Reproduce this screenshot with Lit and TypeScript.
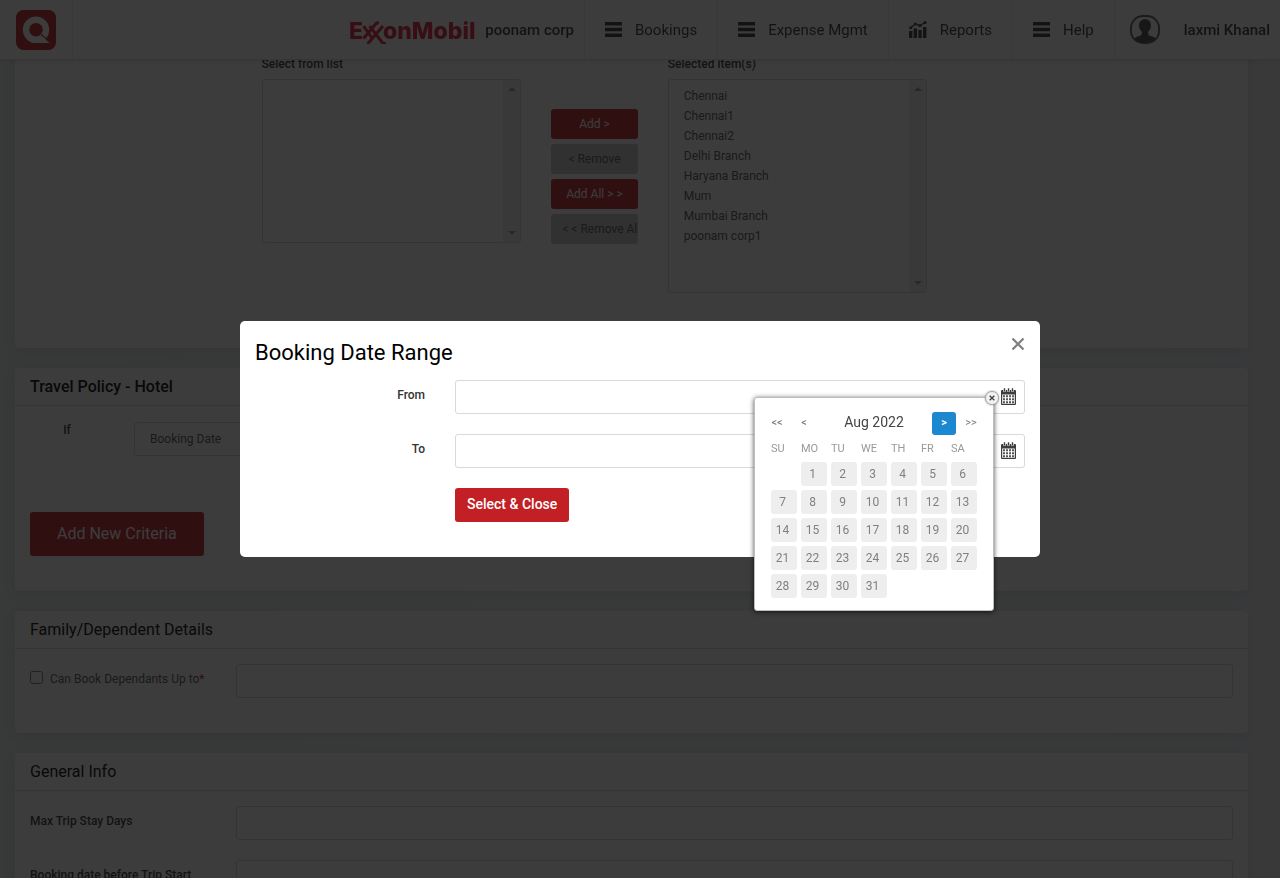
import { LitElement, html, css, svg, nothing } from "lit";
import { customElement, property } from "lit/decorators.js";

const base = css`
  *,
  *::before,
  *::after {
    box-sizing: border-box;
  }
  button,
  input,
  select {
    font: inherit;
    color: inherit;
    margin: 0;
  }
  button {
    cursor: pointer;
    border: 0;
    padding: 0;
    background: none;
  }
`;

const menuIcon = svg`<svg class="icon" viewBox="0 0 17 15" width="17" height="15" aria-hidden="true">
  <path d="M0 0h17v3.4H0zM0 5.8h17v3.4H0zM0 11.6h17V15H0z" fill="#2f3534"/>
</svg>`;

const chartIcon = svg`<svg class="icon" viewBox="0 0 18 17" width="18" height="17" aria-hidden="true">
  <path d="M0 10h3.4v7H0zM4.6 7.500h3.400V17H4.600zM9.300 9h3.400v8H9.300zM14 6h3.400v11H14z" fill="#3a3a3a"/>
  <path d="M1.500 7L6.300 3l4.700 1.600L16 1.500" fill="none" stroke="#3a3a3a" stroke-width="1.200"/>
  <g fill="#3a3a3a"><circle cx="1.700" cy="6.700" r="1.500"/><circle cx="6.300" cy="3" r="1.600"/><circle cx="11" cy="4.600" r="1.600"/><circle cx="16" cy="1.600" r="1.600"/></g>
</svg>`;

const avatarIcon = svg`<svg viewBox="0 0 30 29" width="30" height="29" aria-hidden="true">
  <defs><clipPath id="face"><rect x="1.500" y="1.500" width="27" height="26" rx="11"/></clipPath></defs>
  <g clip-path="url(#face)" fill="#484848">
    <path d="M15 4.300c3.600 0 6 2.500 6 6 0 2.600-1.200 5-2.800 6.300v2.200c0 1.200 1 1.700 3.300 2.500 3 1 5.500 2.300 5.500 7.700H3c0-5.400 2.500-6.700 5.500-7.700 2.300-.8 3.300-1.300 3.300-2.500v-2.200C10.200 15.300 9 12.900 9 10.300c0-3.500 2.400-6 6-6z"/>
  </g>
  <rect x="1" y="1" width="28" height="27" rx="12" fill="none" stroke="#555" stroke-width="1.800"/>
</svg>`;

const appLogo = svg`<svg viewBox="0 0 40 40" width="40" height="40" role="img" aria-label="Home">
  <rect width="40" height="40" rx="7.500" fill="#c32026"/>
  <circle cx="20" cy="19.800" r="10" fill="none" stroke="#fff" stroke-width="6.400"/>
  <path d="M20 33h13.500L24.500 24.500l-4 4.500z" fill="#fff"/>
  <path d="M25 24.500l7.500 6" stroke="#c32026" stroke-width="1.200"/>
</svg>`;

const corpLogo = svg`<svg class="corp-logo" viewBox="0 0 126 28" width="126" height="28" role="img" aria-label="ExxonMobil">
  <g fill="#e01b35" font-family="Inter, sans-serif" font-weight="800" font-size="23">
    <text x="0" y="23">E</text>
    <text x="34" y="23">onMobil</text>
  </g>
  <g stroke="#e01b35" stroke-width="3" fill="none">
    <path d="M14.500 10L23 22M14.500 22.500L27.500 7H30M20.500 10L34 27.500H37M18.500 28L34 10"/>
  </g>
</svg>`;

const calendarIcon = svg`<svg viewBox="0 0 15 17" width="15" height="17" aria-hidden="true">
  <path d="M0 3a1 1 0 0 1 1-1h13a1 1 0 0 1 1 1v13a1 1 0 0 1-1 1H1a1 1 0 0 1-1-1z" fill="#3d3d3d"/>
  <path d="M1.200 6.500h12.600v9.300H1.200z" fill="#fff"/>
  <path d="M2 7.200h2v2H2zM5 7.200h2v2H5zM8 7.200h2v2H8zM11 7.200h2v2h-2zM2 10.200h2v2H2zM5 10.200h2v2H5zM8 10.200h2v2H8zM11 10.200h2v2h-2zM2 13.200h2v2H2zM5 13.200h2v2H5zM8 13.200h2v2H8zM11 13.200h2v2h-2z" fill="#555"/>
  <path d="M3.500.2v3.600M7.500.2v3.600M11.500.2v3.600" stroke="#fff" stroke-width="2.600"/>
  <path d="M3.500.2v3.200M7.500.2v3.200M11.500.2v3.200" stroke="#3d3d3d" stroke-width="1.400"/>
</svg>`;

const closeIcon = svg`<svg viewBox="0 0 14 14" width="14" height="14" aria-hidden="true">
  <path d="M1.500 1.500l11 11M12.500 1.500l-11 11" stroke="#808080" stroke-width="2.300"/>
</svg>`;

const NAV = [
  { label: "Bookings", icon: menuIcon },
  { label: "Expense Mgmt", icon: menuIcon },
  { label: "Reports", icon: chartIcon },
  { label: "Help", icon: menuIcon },
];

const BRANCHES = [
  "Chennai",
  "Chennai1",
  "Chennai2",
  "Delhi Branch",
  "Haryana Branch",
  "Mum",
  "Mumbai Branch",
  "poonam corp1",
];

@customElement("site-header")
class SiteHeader extends LitElement {
  static styles = [
    base,
    css`
      :host {
        display: flex;
        align-items: stretch;
        height: 60px;
        background: #fff;
        border-bottom: 1px solid #e2e2e2;
        box-shadow: 0 1px 5px rgba(0, 0, 0, 0.12);
        color: #333;
        font-size: 15px;
      }
      .home {
        display: flex;
        align-items: center;
        padding: 0 16px;
        border-right: 1px solid #eaeaea;
      }
      .company {
        display: flex;
        align-items: center;
        gap: 10px;
        margin-left: auto;
        padding-right: 10px;
        font-weight: 500;
      }
      .nav {
        display: flex;
      }
      .item {
        display: flex;
        align-items: center;
        gap: 13px;
        padding: 0 20px;
        border-left: 1px solid #eaeaea;
        color: inherit;
        text-decoration: none;
      }
      .user {
        display: flex;
        align-items: center;
        gap: 24px;
        padding: 0 10px 0 15px;
        border-left: 1px solid #eaeaea;
        font-weight: 500;
      }
    `,
  ];

  render() {
    return html`
      <a class="home" href="#">${appLogo}</a>
      <div class="company">${corpLogo}<span>poonam corp</span></div>
      <nav class="nav">
        ${NAV.map((n) => html`<a class="item" href="#">${n.icon}<span>${n.label}</span></a>`)}
      </nav>
      <div class="user">${avatarIcon}<span>laxmi Khanal</span></div>
    `;
  }
}

@customElement("branch-list")
class BranchList extends LitElement {
  @property() label = "";
  @property({ type: Array }) items: string[] = [];
  @property({ type: Boolean, reflect: true }) tall = false;

  static styles = [
    base,
    css`
      :host {
        display: block;
      }
      .label {
        display: block;
        line-height: 20px;
        margin-bottom: 5px;
        font-weight: 500;
      }
      .frame {
        position: relative;
        height: 164px;
        border: 1px solid #d5d5d5;
        border-radius: 3px;
        overflow: hidden;
      }
      :host([tall]) .frame {
        height: 214px;
      }
      .list {
        display: block;
        width: 100%;
        height: 100%;
        padding: 9px 15px;
        border: 0;
        outline: 0;
        background: #fff;
        color: #555;
        overflow: hidden;
      }
      .option {
        height: 20px;
        padding: 0;
        line-height: 20px;
      }
      .bar {
        position: absolute;
        inset: 0 0 0 auto;
        width: 17px;
        padding: 7px 0;
        display: flex;
        flex-direction: column;
        align-items: center;
        justify-content: space-between;
        background: #f1f1f1;
      }
    `,
  ];

  render() {
    return html`
      <label class="label" for="list">${this.label}</label>
      <div class="frame">
        <select class="list" id="list" multiple>
          ${this.items.map((i) => html`<option class="option">${i}</option>`)}
        </select>
        <div class="bar" aria-hidden="true">
          <svg viewBox="0 0 8 4" width="8" height="4"><path d="M0 4l4-4 4 4z" fill="#999" /></svg>
          <svg viewBox="0 0 8 4" width="8" height="4"><path d="M0 0l4 4 4-4z" fill="#999" /></svg>
        </div>
      </div>
    `;
  }
}

@customElement("date-picker")
class DatePicker extends LitElement {
  @property() month = "Aug 2022";
  @property({ type: Number }) firstDay = 1;
  @property({ type: Number }) days = 31;

  static styles = [
    base,
    css`
      :host {
        display: block;
        width: 240px;
        padding: 14px 10px 8px;
        background: #fff;
        border: 1px solid #bdbdbd;
        border-radius: 3px;
        box-shadow: 0 1px 5px rgba(0, 0, 0, 0.7);
        color: #777;
      }
      .head {
        display: grid;
        grid-template-columns: 24px 24px 1fr 24px 24px;
        column-gap: 3px;
        align-items: start;
        height: 23px;
        text-align: center;
        font-size: 11px;
      }
      .step {
        height: 23px;
        padding-bottom: 2px;
        border-radius: 3px;
      }
      .active {
        background: #1c88cf;
        color: #fff;
        font-weight: 700;
      }
      .month {
        font-size: 14px;
        line-height: 20px;
        color: #444;
      }
      .grid {
        border-spacing: 4px;
        margin-left: 2px;
      }
      .weekday {
        width: 26px;
        height: 19px;
        padding: 0;
        font-size: 11px;
        font-weight: 400;
        text-align: left;
        color: #999;
      }
      .cell {
        height: 24px;
        padding: 0;
      }
      .day {
        display: block;
        width: 26px;
        height: 24px;
        padding-right: 3px;
        border-radius: 3px;
        background: #eee;
        color: #808080;
        text-align: center;
      }
      .close {
        position: absolute;
        top: -7px;
        right: -6px;
        display: flex;
        align-items: center;
        justify-content: center;
        width: 14px;
        height: 14px;
        border: 1px solid #aaa;
        border-radius: 50%;
        background: #f2f2f2;
        box-shadow: 0 0 2px rgba(0, 0, 0, 0.4);
      }
    `,
  ];

  private weeks() {
    const cells: number[] = [
      ...Array(this.firstDay).fill(0),
      ...Array.from({ length: this.days }, (_, i) => i + 1),
    ];
    while (cells.length % 7) cells.push(0);
    return Array.from({ length: cells.length / 7 }, (_, w) => cells.slice(w * 7, w * 7 + 7));
  }

  render() {
    return html`
      <div class="head">
        <button class="step" aria-label="Previous year">&lt;&lt;</button>
        <button class="step" aria-label="Previous month">&lt;</button>
        <span class="month">${this.month}</span>
        <button class="step active" aria-label="Next month">&gt;</button>
        <button class="step" aria-label="Next year">&gt;&gt;</button>
      </div>
      <table class="grid">
        <thead>
          <tr>
            ${["SU", "MO", "TU", "WE", "TH", "FR", "SA"].map(
              (d) => html`<th class="weekday" scope="col">${d}</th>`
            )}
          </tr>
        </thead>
        <tbody>
          ${this.weeks().map(
            (w) => html`<tr>
              ${w.map(
                (d) => html`<td class="cell">${d ? html`<button class="day">${d}</button>` : nothing}</td>`
              )}
            </tr>`
          )}
        </tbody>
      </table>
      <button class="close" aria-label="Close calendar">
        <svg viewBox="0 0 6 6" width="6" height="6"><path d="M.7.7l4.600 4.600M5.300.7L.7 5.300" stroke="#444" stroke-width="1.400" /></svg>
      </button>
    `;
  }
}

@customElement("range-dialog")
class RangeDialog extends LitElement {
  static styles = [
    base,
    css`
      :host {
        position: relative;
        display: block;
        width: 800px;
        max-width: 100%;
        padding: 15px 15px 35px;
        background: #fff;
        border-radius: 5px;
        color: #333;
      }
      .top {
        display: flex;
        justify-content: space-between;
        align-items: flex-start;
        margin-bottom: 10px;
      }
      .title {
        margin: 0;
        font-size: 22px;
        line-height: 34px;
        font-weight: 400;
        color: #000;
      }
      .close {
        display: flex;
        margin-top: 1px;
      }
      .form {
        display: grid;
        grid-template-columns: 170px 1fr;
        column-gap: 30px;
        row-gap: 20px;
      }
      .label {
        line-height: 30px;
        text-align: right;
        font-weight: 500;
      }
      .field {
        position: relative;
        display: flex;
      }
      .input {
        flex: 1;
        min-width: 0;
        height: 34px;
        padding: 0 35px 0 15px;
        border: 1px solid #d9d9d9;
        border-radius: 3px;
        background: #fff;
      }
      .pick {
        position: absolute;
        top: 8px;
        right: 9px;
        display: flex;
      }
      .submit {
        grid-column: 2;
        justify-self: start;
        height: 34px;
        padding: 0 12px 2px;
        border-radius: 3px;
        background: #c32026;
        color: #fff;
        font-size: 14px;
        font-weight: 500;
      }
      .picker {
        position: absolute;
        top: 76px;
        right: 46px;
      }
    `,
  ];

  render() {
    return html`
      <div class="top">
        <h2 class="title">Booking Date Range</h2>
        <button class="close" aria-label="Close">${closeIcon}</button>
      </div>
      <div class="form">
        <label class="label" for="from">From</label>
        <div class="field">
          <input class="input" id="from" type="text" />
          <button class="pick" aria-label="Pick start date">${calendarIcon}</button>
        </div>
        <label class="label" for="to">To</label>
        <div class="field">
          <input class="input" id="to" type="text" />
          <button class="pick" aria-label="Pick end date">${calendarIcon}</button>
        </div>
        <button class="submit">Select &amp; Close</button>
      </div>
      <date-picker class="picker"></date-picker>
    `;
  }
}

@customElement("app-root")
class AppRoot extends LitElement {
  static styles = [
    base,
    css`
      :host {
        display: block;
        height: 100vh;
        overflow: hidden;
        background: linear-gradient(90deg, #e9f0f0, #eef2f2 50%, #eff1f6);
        font-family: Roboto, "Liberation Sans", sans-serif;
        font-size: 12px;
        color: #333;
      }
      .header {
        position: fixed;
        inset: 0 0 auto;
        z-index: 1;
      }
      .page {
        display: flex;
        flex-direction: column;
        gap: 20px;
        padding: 0 32px 0 15px;
      }
      .card {
        background: #fff;
        border-radius: 4px;
        box-shadow: 0 2px 15px rgba(0, 0, 0, 0.1);
      }
      .branches {
        display: grid;
        grid-template-columns: 3fr 1fr 3fr;
        column-gap: 30px;
        align-items: start;
        padding: 54px 26% 55px 20%;
      }
      .transfer {
        display: grid;
        gap: 5px;
        padding-top: 55px;
      }
      .move {
        height: 30px;
        padding: 0 11px;
        border-radius: 3px;
        background: #c8c8c8;
        color: #555;
        overflow: hidden;
        white-space: nowrap;
      }
      .primary {
        background: #c32026;
        color: #fff;
      }
      .heading {
        margin: 0;
        padding: 0 15px;
        border-bottom: 1px solid #ddd;
        font-size: 16px;
        line-height: 37px;
        font-weight: 400;
        color: #000;
      }
      .strong {
        font-weight: 500;
      }
      .body {
        padding: 15px 15px 35px;
      }
      .criteria {
        display: grid;
        grid-template-columns: 74px 20%;
        column-gap: 30px;
        padding-top: 1px;
        margin-bottom: 56px;
      }
      .if {
        line-height: 16px;
        text-align: center;
        font-weight: 500;
      }
      .select {
        height: 34px;
        padding: 0 15px;
        border: 1px solid #d5d5d5;
        border-radius: 3px;
        background: #fff;
        color: #555;
        appearance: none;
      }
      .add {
        height: 44px;
        padding: 0 27px 2px;
        border-radius: 3px;
        background: #c32026;
        color: #fff;
        font-size: 16px;
      }
      .rows {
        display: grid;
        grid-template-columns: 3fr 17fr;
        column-gap: 30px;
        row-gap: 20px;
      }
      .label {
        min-width: 0;
        line-height: 30px;
        font-weight: 500;
        white-space: nowrap;
      }
      .check {
        display: flex;
        align-items: center;
        gap: 7px;
        min-width: 0;
        height: 30px;
        color: #555;
        white-space: nowrap;
      }
      .box {
        width: 13px;
        height: 13px;
        margin-bottom: 3px;
      }
      .star {
        color: #e00;
      }
      .input {
        width: 100%;
        height: 34px;
        padding: 0 15px;
        border: 1px solid #d5d5d5;
        border-radius: 3px;
        background: #fff;
      }
      .overlay {
        position: fixed;
        inset: 0;
        z-index: 2;
        display: flex;
        align-items: center;
        justify-content: center;
        background: rgba(11, 11, 11, 0.8);
      }
    `,
  ];

  render() {
    return html`
      <site-header class="header"></site-header>
      <main class="page">
        <section class="card branches">
          <branch-list label="Select from list"></branch-list>
          <div class="transfer">
            <button class="move primary">Add &gt;</button>
            <button class="move">&lt; Remove</button>
            <button class="move primary">Add All &gt; &gt;</button>
            <button class="move">&lt; &lt; Remove All</button>
          </div>
          <branch-list label="Selected item(s)" .items=${BRANCHES} tall></branch-list>
        </section>

        <section class="card">
          <h3 class="heading strong">Travel Policy - Hotel</h3>
          <div class="body">
            <div class="criteria">
              <label class="if" for="criterion">If</label>
              <select class="select" id="criterion">
                <option>Booking Date</option>
              </select>
            </div>
            <button class="add">Add New Criteria</button>
          </div>
        </section>

        <section class="card">
          <h3 class="heading">Family/Dependent Details</h3>
          <div class="body">
            <div class="rows">
              <label class="check">
                <input class="box" type="checkbox" />
                <span>Can Book Dependants Up to<span class="star">*</span></span>
              </label>
              <input class="input" type="text" aria-label="Dependants limit" />
            </div>
          </div>
        </section>

        <section class="card">
          <h3 class="heading">General Info</h3>
          <div class="body rows">
            <label class="label" for="stay">Max Trip Stay Days</label>
            <input class="input" id="stay" type="text" />
            <label class="label" for="before">Booking date before Trip Start</label>
            <input class="input" id="before" type="text" />
          </div>
        </section>
      </main>

      <div class="overlay" role="dialog" aria-modal="true" aria-label="Booking Date Range">
        <range-dialog></range-dialog>
      </div>
    `;
  }
}
